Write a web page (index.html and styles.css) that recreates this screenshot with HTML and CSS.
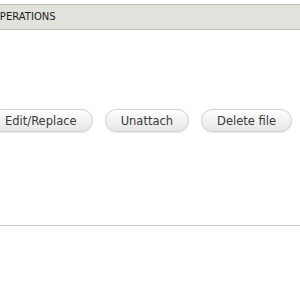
FILE: index.html
```html
<!DOCTYPE html>
<html lang="en">
<head>
    <meta charset="UTF-8">
    <title>File operations</title>
    <link rel="stylesheet" href="styles.css">
</head>
<body>
    <div class="table">
        <div class="head">Operations</div>
        <div class="row">
            <button class="btn">Edit/Replace</button>
            <button class="btn">Unattach</button>
            <button class="btn">Delete file</button>
        </div>
    </div>
</body>
</html>
```

FILE: styles.css
```css
body {
    margin: 0;
    font-family: "DejaVu Sans", Verdana, sans-serif;
    color: #333333;
    background: #ffffff;
}
.table {
    margin-top: 4px;
    margin-left: -11px;
    border-bottom: 1px solid #c8c8c8;
}
.head {
    background: #e1e2dc;
    border-top: 1px solid #bebfb9;
    border-bottom: 1px solid #bebfb9;
    padding: 5px 11px 5px 11px;
    text-indent: -8px;
    font-size: 10px;
    line-height: 14px;
    text-transform: uppercase;
    color: #1e1e1e;
}
.row {
    display: flex;
    gap: 12px;
    padding: 79px 0 93px 0;
}
.btn {
    font-family: "DejaVu Sans", Verdana, sans-serif;
    font-size: 11.5px;
    color: #3a3a3a;
    height: 23px;
    padding: 0 15px;
    border: 1px solid #cfcfcf;
    border-radius: 12px;
    background: linear-gradient(#fefefe, #e6e6e6);
    box-shadow: 0 1px 1px rgba(0, 0, 0, 0.08);
}
```
